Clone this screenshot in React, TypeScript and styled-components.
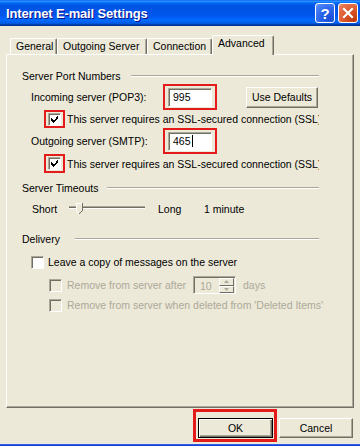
import React from "react";
import styled, { createGlobalStyle } from "styled-components";

const Global = createGlobalStyle`
  html, body { margin: 0; padding: 0; background: #ece9d8; }
  body { font-family: "Liberation Sans", Arial, sans-serif; font-size: 10.5px; color: #000; }
  * { box-sizing: border-box; }
`;

const Window = styled.div`
  width: 360px;
  height: 446px;
  display: flex;
  flex-direction: column;
  background: #ece9d8;
  overflow: hidden;
`;

const TitleBar = styled.div`
  height: 26px;
  flex: none;
  display: flex;
  align-items: center;
  padding: 0 2px 0 6px;
  background: linear-gradient(
    to bottom,
    #0058ee 0%, #3593ff 4%, #288eff 6%, #127dff 8%, #036ffc 10%, #0262ee 14%,
    #0057e5 20%, #0054e3 24%, #0055eb 56%, #005bf5 66%, #026afe 76%,
    #0062ef 86%, #0052d6 92%, #0040ab 94%, #003092 100%
  );
`;

const Title = styled.div`
  flex: 1;
  color: #fff;
  font-weight: bold;
  font-size: 13px;
  letter-spacing: -0.15px;
  text-shadow: 1px 1px #0f1089;
  white-space: nowrap;
`;

const CaptionButton = styled.div<{ $variant: "help" | "close" }>`
  width: 20px;
  height: 20px;
  margin-left: 3px;
  border: 1px solid #fff;
  border-radius: 3px;
  display: flex;
  align-items: center;
  justify-content: center;
  color: #fff;
  font-weight: bold;
  font-size: 15px;
  background: ${(p) =>
    p.$variant === "close"
      ? "radial-gradient(circle at 80% 85%, #c13a0e 0%, #dd5a2e 50%, #e97a55 85%, #f4a07f 100%)"
      : "radial-gradient(circle at 80% 85%, #1a4fd6 0%, #2c64ec 50%, #4d85f5 85%, #7aa6fb 100%)"};
`;

const Content = styled.div`
  flex: 1;
  display: flex;
  flex-direction: column;
  padding: 9px 6px 0 6px;
`;

const TabRow = styled.div`
  position: relative;
  z-index: 1;
  height: 20px;
  display: flex;
  align-items: flex-end;
  padding-left: 4px;
`;

const Tab = styled.div<{ $active?: boolean; $w: number }>`
  width: ${(p) => p.$w}px;
  height: ${(p) => (p.$active ? 20 : 16)}px;
  margin-bottom: ${(p) => (p.$active ? 0 : 1)}px;
  padding: 1px 0 0 5px;
  line-height: 13px;
  border-top: 1px solid #fff;
  border-left: 1px solid #fff;
  border-right: 1px solid #716f64;
  border-radius: 2px 2px 0 0;
  box-shadow: inset -1px 0 #aca899;
  background: #ece9d8;
  white-space: nowrap;
`;

const Panel = styled.div`
  height: 354px;
  margin-top: -1px;
  border: 1px solid;
  border-color: #fff #716f64 #716f64 #fff;
  box-shadow: inset -1px -1px #aca899;
  padding: 14px 0 0 15px;
`;

const Section = styled.div`
  width: 297px;
  display: flex;
  flex-direction: column;
`;

const GroupHeader = styled.div<{ $mt?: number }>`
  height: 14px;
  margin-top: ${(p) => p.$mt ?? 0}px;
  display: flex;
  align-items: center;
  white-space: nowrap;
`;

const Rule = styled.div<{ $gap: number }>`
  flex: 1;
  height: 2px;
  margin-left: ${(p) => p.$gap}px;
  border-top: 1px solid #aca899;
  border-bottom: 1px solid #fff;
`;

const Row = styled.div<{ $h: number; $mt?: number; $indent: number }>`
  height: ${(p) => p.$h}px;
  margin-top: ${(p) => p.$mt ?? 0}px;
  padding-left: ${(p) => p.$indent}px;
  display: flex;
  align-items: center;
  white-space: nowrap;
`;

const Label = styled.div<{ $w?: number; $ml?: number; $disabled?: boolean; $clip?: boolean }>`
  flex: none;
  ${(p) => (p.$w ? `width: ${p.$w}px;` : "")}
  margin-left: ${(p) => p.$ml ?? 0}px;
  overflow: ${(p) => (p.$clip ? "hidden" : "visible")};
  white-space: nowrap;
  color: ${(p) => (p.$disabled ? "#aca899" : "#000")};
`;

const Highlight = styled.div<{ $w: number; $h: number }>`
  width: ${(p) => p.$w}px;
  height: ${(p) => p.$h}px;
  flex: none;
  border: 2px solid #e31b1b;
  display: flex;
  align-items: center;
  justify-content: center;
`;

const OkHighlight = styled.div`
  width: 84px;
  height: 33px;
  border: 3px solid #e31b1b;
  padding: 6px 1px 1px 2px;
  display: flex;
`;

const Edit = styled.div`
  width: 44px;
  height: 19px;
  background: #fff;
  border: 1px solid;
  border-color: #aca899 #fff #fff #aca899;
  box-shadow: inset 1px 1px #716f64;
  padding-left: 4px;
  display: flex;
  align-items: center;
`;

const Caret = styled.span`
  display: inline-block;
  width: 1px;
  height: 12px;
  margin-left: 1px;
  background: #000;
`;

const Button = styled.div<{ $w: number; $h: number }>`
  width: ${(p) => p.$w}px;
  height: ${(p) => p.$h}px;
  flex: none;
  display: flex;
  align-items: center;
  justify-content: center;
  background: #ece9d8;
  border: 1px solid;
  border-color: #fff #716f64 #716f64 #fff;
  box-shadow: inset -1px -1px #aca899;
`;

const DefaultButton = styled(Button)`
  border: 1px solid #000;
  box-shadow: inset 1px 1px #fff, inset -1px -1px #716f64, inset -2px -2px #aca899;
`;

const UseDefaults = styled(Button)`
  margin-left: auto;
  margin-right: 1px;
`;

const CancelButton = styled(Button)`
  margin-left: 2px;
  margin-bottom: 4px;
`;

const Box = styled.div<{ $disabled?: boolean }>`
  width: 13px;
  height: 13px;
  flex: none;
  border: 1px solid;
  border-color: #aca899 #fff #fff #aca899;
  box-shadow: inset 1px 1px #716f64;
  background: ${(p) => (p.$disabled ? "#ece9d8" : "#fff")};
  display: flex;
  align-items: center;
  justify-content: center;
`;

const Check = ({ checked, disabled }: { checked?: boolean; disabled?: boolean }) => (
  <Box $disabled={disabled}>
    {checked && (
      <svg width="7" height="7" viewBox="0 0 7 7" shapeRendering="crispEdges">
        <path
          d="M0 2h1v1h-1zM0 3h2v1h-2zM0 4h3v1h-3zM1 5h3v1h-3zM2 6h1v1h-1zM3 4h2v1h-2zM4 3h2v1h-2zM5 2h2v1h-2zM6 0h1v2h-1zM5 1h2v1h-2z"
          fill="#000"
        />
      </svg>
    )}
  </Box>
);

const Spin = styled.div`
  width: 43px;
  height: 18px;
  flex: none;
  display: flex;
  border: 1px solid;
  border-color: #aca899 #fff #fff #aca899;
  box-shadow: inset 1px 1px #716f64;
  background: #ece9d8;
  padding: 1px 1px 0 1px;
`;

const SpinText = styled.div`
  flex: 1;
  padding-left: 5px;
  display: flex;
  align-items: center;
  color: #aca899;
`;

const SpinButtons = styled.div`
  width: 15px;
  display: flex;
  flex-direction: column;
`;

const SpinArrow = styled.div`
  flex: 1;
  display: flex;
  align-items: center;
  justify-content: center;
  border: 1px solid;
  border-color: #fff #716f64 #716f64 #fff;
  background: #ece9d8;
`;

const SliderWrap = styled.div`
  width: 78px;
  height: 18px;
  flex: none;
`;

const BottomFrame = styled.div`
  height: 2px;
  flex: none;
  background: linear-gradient(#3a6ee8, #0831d9);
`;

const Slider = () => (
  <SliderWrap>
    <svg width="78" height="18" viewBox="0 0 78 18" shapeRendering="crispEdges">
      <rect x="1" y="6" width="76" height="1" fill="#aca899" />
      <rect x="1" y="7" width="76" height="1" fill="#716f64" />
      <rect x="1" y="8" width="76" height="1" fill="#fff" />
      <path d="M8 3h6v8l-3 3l-3-3z" fill="#ece9d8" />
      <path d="M8 3h6M8 3v8" stroke="#fff" strokeWidth="1" fill="none" />
      <path d="M14 3v8l-3 3" stroke="#716f64" strokeWidth="1" fill="none" />
      <path d="M8 11l3 3" stroke="#fff" strokeWidth="1" fill="none" />
    </svg>
  </SliderWrap>
);

const Footer = styled.div`
  height: 33px;
  margin-top: 1px;
  padding-right: 1px;
  display: flex;
  justify-content: flex-end;
  align-items: flex-end;
`;

export default function App() {
  return (
    <>
      <Global />
      <Window>
        <TitleBar>
          <Title>Internet E-mail Settings</Title>
          <CaptionButton $variant="help">?</CaptionButton>
          <CaptionButton $variant="close">
            <svg width="12" height="12" viewBox="0 0 12 12">
              <path d="M2 2L10 10M10 2L2 10" stroke="#fff" strokeWidth="2.2" strokeLinecap="square" />
            </svg>
          </CaptionButton>
        </TitleBar>
        <Content>
          <TabRow>
            <Tab $w={47}>General</Tab>
            <Tab $w={90}>Outgoing Server</Tab>
            <Tab $w={65}>Connection</Tab>
            <Tab $w={62} $active>
              Advanced
            </Tab>
          </TabRow>
          <Panel>
            <Section>
              <GroupHeader>
                <span>Server Port Numbers</span>
                <Rule $gap={10} />
              </GroupHeader>
              <Row $h={26} $mt={1} $indent={9}>
                <Label $w={132}>Incoming server (POP3):</Label>
                <Highlight $w={54} $h={26}>
                  <Edit>995</Edit>
                </Highlight>
                <UseDefaults $w={72} $h={21}>Use Defaults</UseDefaults>
              </Row>
              <Row $h={18} $indent={22}>
                <Highlight $w={21} $h={18}>
                  <Check checked />
                </Highlight>
                <Label $w={252} $ml={2} $clip>
                  This server requires an SSL-secured connection (SSL)
                </Label>
              </Row>
              <Row $h={26} $indent={9}>
                <Label $w={132}>Outgoing server (SMTP):</Label>
                <Highlight $w={54} $h={26}>
                  <Edit>
                    465
                    <Caret />
                  </Edit>
                </Highlight>
              </Row>
              <Row $h={19} $indent={22}>
                <Highlight $w={21} $h={19}>
                  <Check checked />
                </Highlight>
                <Label $w={252} $ml={2} $clip>
                  This server requires an SSL-secured connection (SSL)
                </Label>
              </Row>
            </Section>
            <Section>
              <GroupHeader $mt={8}>
                <span>Server Timeouts</span>
                <Rule $gap={9} />
              </GroupHeader>
              <Row $h={18} $mt={5} $indent={10}>
                <Label $w={36}>Short</Label>
                <Slider />
                <Label $w={46} $ml={12}>Long</Label>
                <Label>1 minute</Label>
              </Row>
            </Section>
            <Section>
              <GroupHeader $mt={14}>
                <span>Delivery</span>
                <Rule $gap={15} />
              </GroupHeader>
              <Row $h={18} $mt={7} $indent={9}>
                <Check />
                <Label $ml={4}>Leave a copy of messages on the server</Label>
              </Row>
              <Row $h={18} $mt={5} $indent={27}>
                <Check disabled />
                <Label $w={126} $ml={5} $disabled>
                  Remove from server after
                </Label>
                <Spin>
                  <SpinText>10</SpinText>
                  <SpinButtons>
                    <SpinArrow>
                      <svg width="5" height="3" viewBox="0 0 5 3">
                        <path d="M2.5 0L5 3H0z" fill="#aca899" />
                      </svg>
                    </SpinArrow>
                    <SpinArrow>
                      <svg width="5" height="3" viewBox="0 0 5 3">
                        <path d="M0 0H5L2.5 3z" fill="#aca899" />
                      </svg>
                    </SpinArrow>
                  </SpinButtons>
                </Spin>
                <Label $ml={7} $disabled>
                  days
                </Label>
              </Row>
              <Row $h={16} $mt={3} $indent={27}>
                <Check disabled />
                <Label $ml={5} $disabled>
                  Remove from server when deleted from 'Deleted Items'
                </Label>
              </Row>
            </Section>
          </Panel>
          <Footer>
            <OkHighlight>
              <DefaultButton $w={75} $h={20}>OK</DefaultButton>
            </OkHighlight>
            <CancelButton $w={74} $h={20}>Cancel</CancelButton>
          </Footer>
        </Content>
        <BottomFrame />
      </Window>
    </>
  );
}
